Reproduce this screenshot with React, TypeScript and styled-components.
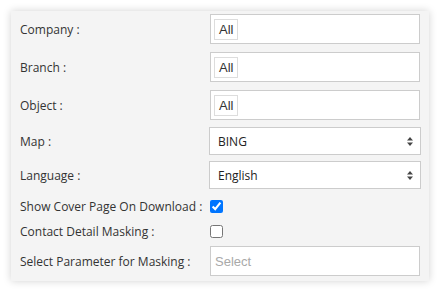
import React, { useState } from 'react';
import styled, { createGlobalStyle } from 'styled-components';

const GlobalStyle = createGlobalStyle`
  html, body {
    margin: 0;
    padding: 0;
    background: #ffffff;
  }
  body {
    font-family: 'Open Sans', 'Liberation Sans', sans-serif;
  }
`;

const Page = styled.div`
  width: 440px;
  height: 292px;
  padding: 11px;
  box-sizing: border-box;
`;

const Panel = styled.div`
  width: 418px;
  height: 270px;
  box-sizing: border-box;
  background: #f4f4f4;
  box-shadow: 0 0 8px rgba(0, 0, 0, 0.18);
  padding: 0 9px 0 9px;
  display: flex;
  flex-direction: column;
`;

const Row = styled.div<{ $h: number; $mt: number }>`
  display: grid;
  grid-template-columns: 190px 1fr;
  align-items: center;
  height: ${(p) => p.$h}px;
  margin-top: ${(p) => p.$mt}px;
`;

const Label = styled.label`
  font-size: 12px;
  color: #333;
  white-space: nowrap;
`;

const TagBox = styled.div`
  height: 30px;
  box-sizing: border-box;
  background: #fff;
  border: 1px solid #ccc;
  display: flex;
  align-items: center;
  padding-left: 3px;
`;

const Chip = styled.span`
  height: 21px;
  box-sizing: border-box;
  border: 1px solid #ddd;
  padding: 0 4px;
  display: flex;
  align-items: center;
  font-family: 'Liberation Sans', Arial, sans-serif;
  font-size: 13px;
  color: #333;
`;

const SelectWrap = styled.div`
  position: relative;
  height: 28px;
  margin: 0 -1px;
`;

const Select = styled.select`
  appearance: none;
  width: 100%;
  height: 100%;
  box-sizing: border-box;
  border: 1px solid #ccc;
  border-radius: 0;
  background: #fff;
  padding: 0 0 0 8px;
  font-family: 'Open Sans', sans-serif;
  font-size: 12px;
  color: #222;
  outline: none;
`;

const Arrows = styled.svg`
  position: absolute;
  right: 8px;
  top: 10px;
  pointer-events: none;
`;

const Check = styled.input`
  width: 13px;
  height: 13px;
  margin: 0;
  accent-color: #0075ff;
`;

const TextInput = styled.input`
  height: 30px;
  box-sizing: border-box;
  border: 1px solid #ccc;
  background: #fff;
  padding: 0 4px;
  font-family: 'Liberation Sans', Arial, sans-serif;
  font-size: 13px;
  outline: none;
  &::placeholder {
    color: #a9a9a9;
  }
`;

const UpDown = () => (
  <Arrows width="6" height="9" viewBox="0 0 6 9">
    <path d="M3 0 L6 3.5 H0 Z" fill="#444" />
    <path d="M3 9 L6 5.5 H0 Z" fill="#444" />
  </Arrows>
);

const TagField = ({ value }: { value: string }) => (
  <TagBox>
    <Chip>{value}</Chip>
  </TagBox>
);

const App = () => {
  const [map, setMap] = useState('BING');
  const [lang, setLang] = useState('English');
  const [cover, setCover] = useState(true);
  const [masking, setMasking] = useState(false);

  return (
    <Page>
      <GlobalStyle />
      <Panel>
        <Row $h={30} $mt={3}>
          <Label>Company :</Label>
          <TagField value="All" />
        </Row>
        <Row $h={30} $mt={8}>
          <Label>Branch :</Label>
          <TagField value="All" />
        </Row>
        <Row $h={30} $mt={8}>
          <Label>Object :</Label>
          <TagField value="All" />
        </Row>
        <Row $h={28} $mt={7}>
          <Label>Map :</Label>
          <SelectWrap>
            <Select value={map} onChange={(e) => setMap(e.target.value)}>
              <option>BING</option>
              <option>GOOGLE</option>
            </Select>
            <UpDown />
          </SelectWrap>
        </Row>
        <Row $h={28} $mt={6}>
          <Label>Language :</Label>
          <SelectWrap>
            <Select value={lang} onChange={(e) => setLang(e.target.value)}>
              <option>English</option>
            </Select>
            <UpDown />
          </SelectWrap>
        </Row>
        <Row $h={13} $mt={9}>
          <Label>Show Cover Page On Download :</Label>
          <Check type="checkbox" checked={cover} onChange={() => setCover(!cover)} />
        </Row>
        <Row $h={13} $mt={12}>
          <Label>Contact Detail Masking :</Label>
          <Check type="checkbox" checked={masking} onChange={() => setMasking(!masking)} />
        </Row>
        <Row $h={30} $mt={10}>
          <Label>Select Parameter for Masking :</Label>
          <TextInput placeholder="Select" />
        </Row>
      </Panel>
    </Page>
  );
};

export default App;
